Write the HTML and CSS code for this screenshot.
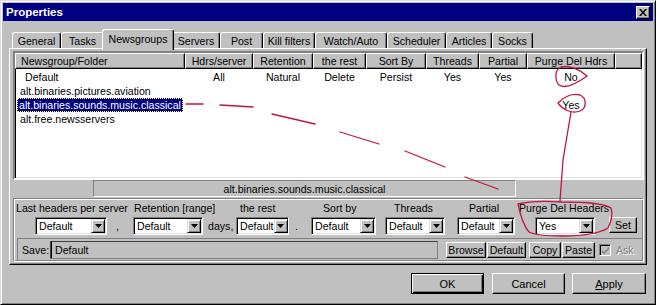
FILE: index.html
```html
<!DOCTYPE html>
<html lang="en">
<head>
<meta charset="UTF-8">
<title>Properties</title>
<link rel="stylesheet" href="styles.css">
</head>
<body>
<div class="window">
  <div class="titlebar">
    <span class="title">Properties</span>
    <span class="close">
      <svg width="8" height="7" viewBox="0 0 8 7"><path d="M0 0h2l2 2.5L6 0h2L5 3.5 8 7H6L4 4.5 2 7H0l3-3.5z" fill="#000"/></svg>
    </span>
  </div>

  <div class="main">
    <div class="tabs">
      <div class="tab t-general">General</div>
      <div class="tab t-tasks">Tasks</div>
      <div class="tab active">Newsgroups</div>
      <div class="tab t-servers">Servers</div>
      <div class="tab t-post">Post</div>
      <div class="tab t-kill">Kill filters</div>
      <div class="tab t-watch">Watch/Auto</div>
      <div class="tab t-sched">Scheduler</div>
      <div class="tab t-articles">Articles</div>
      <div class="tab t-socks">Socks</div>
    </div>

    <div class="panel">
      <div class="list">
        <div class="list-head cols">
          <div class="hcell first">Newsgroup/Folder</div>
          <div class="hcell">Hdrs/server</div>
          <div class="hcell">Retention</div>
          <div class="hcell">the rest</div>
          <div class="hcell">Sort By</div>
          <div class="hcell">Threads</div>
          <div class="hcell">Partial</div>
          <div class="hcell">Purge Del Hdrs</div>
          <div class="hcell"></div>
        </div>
        <div class="rows">
          <div class="row cols">
            <div class="cell name default">Default</div>
            <div class="cell">All</div>
            <div class="cell">Natural</div>
            <div class="cell">Delete</div>
            <div class="cell">Persist</div>
            <div class="cell">Yes</div>
            <div class="cell">Yes</div>
            <div class="cell">No</div>
          </div>
          <div class="row cols">
            <div class="cell name">alt.binaries.pictures.aviation</div>
          </div>
          <div class="row cols">
            <div class="cell name"><span class="selected">alt.binaries.sounds.music.classical</span></div>
            <div class="cell"></div>
            <div class="cell"></div>
            <div class="cell"></div>
            <div class="cell"></div>
            <div class="cell"></div>
            <div class="cell"></div>
            <div class="cell">Yes</div>
          </div>
          <div class="row cols">
            <div class="cell name">alt.free.newsservers</div>
          </div>
        </div>
      </div>

      <div class="status">
        <div class="status-box">alt.binaries.sounds.music.classical</div>
      </div>

      <div class="group">
        <div class="fields">
          <div class="field f-last">
            <div class="field-label">Last headers per server</div>
            <div class="field-row">
              <div class="combo"><span class="combo-text">Default</span><span class="combo-btn"><svg width="7" height="4" viewBox="0 0 7 4"><path d="M0 0h7L3.5 4z" fill="#000"/></svg></span></div>
              <span class="sep">,</span>
            </div>
          </div>
          <div class="field f-ret">
            <div class="field-label">Retention [range]</div>
            <div class="field-row">
              <div class="combo"><span class="combo-text">Default</span><span class="combo-btn"><svg width="7" height="4" viewBox="0 0 7 4"><path d="M0 0h7L3.5 4z" fill="#000"/></svg></span></div>
              <span class="sep">days,</span>
            </div>
          </div>
          <div class="field f-rest">
            <div class="field-label">the rest</div>
            <div class="field-row">
              <div class="combo"><span class="combo-text">Default</span><span class="combo-btn"><svg width="7" height="4" viewBox="0 0 7 4"><path d="M0 0h7L3.5 4z" fill="#000"/></svg></span></div>
              <span class="sep">.</span>
            </div>
          </div>
          <div class="field f-sort">
            <div class="field-label">Sort by</div>
            <div class="field-row">
              <div class="combo"><span class="combo-text">Default</span><span class="combo-btn"><svg width="7" height="4" viewBox="0 0 7 4"><path d="M0 0h7L3.5 4z" fill="#000"/></svg></span></div>
            </div>
          </div>
          <div class="field f-threads">
            <div class="field-label">Threads</div>
            <div class="field-row">
              <div class="combo"><span class="combo-text">Default</span><span class="combo-btn"><svg width="7" height="4" viewBox="0 0 7 4"><path d="M0 0h7L3.5 4z" fill="#000"/></svg></span></div>
            </div>
          </div>
          <div class="field f-partial">
            <div class="field-label">Partial</div>
            <div class="field-row">
              <div class="combo"><span class="combo-text">Default</span><span class="combo-btn"><svg width="7" height="4" viewBox="0 0 7 4"><path d="M0 0h7L3.5 4z" fill="#000"/></svg></span></div>
            </div>
          </div>
          <div class="field f-purge">
            <div class="field-label">Purge Del Headers</div>
            <div class="field-row">
              <div class="combo"><span class="combo-text">Yes</span><span class="combo-btn"><svg width="7" height="4" viewBox="0 0 7 4"><path d="M0 0h7L3.5 4z" fill="#000"/></svg></span></div>
            </div>
          </div>
          <div class="field f-set">
            <div class="btn small set">Set</div>
          </div>
        </div>

        <div class="save-row">
          <span class="save-label">Save:</span>
          <div class="save-field">Default</div>
          <div class="btn small browse">Browse</div>
          <div class="btn small bdefault">Default</div>
          <div class="btn small copy">Copy</div>
          <div class="btn small paste">Paste</div>
          <span class="check">
            <svg width="7" height="7" viewBox="0 0 7 7"><path d="M0 3l2 2 5-5v2L2 7 0 5z" fill="#808080"/></svg>
          </span>
          <span class="ask">Ask</span>
        </div>
      </div>
    </div>

    <div class="actions">
      <div class="btn big ok">OK</div>
      <div class="btn big">Cancel</div>
      <div class="btn big apply"><u>A</u>pply</div>
    </div>
  </div>
</div>

<!-- red pen marks drawn over the dialog -->
<svg class="marks" width="656" height="305" viewBox="0 0 656 305">
  <g fill="none" stroke="#c4143c" stroke-width="1.3" stroke-linecap="round" stroke-linejoin="round">
    <path d="M587 76C579 69 569 65 561 67C554 70 555 81 559 85C565 89 576 84 587 76"/>
    <path d="M558 103C563 97 572 93 580 95C587 98 587 108 580 111C572 114 563 110 558 103"/>
    <path d="M571 112L563 160L560 201"/>
    <path d="M518 204C530 201 548 201 562 202C585 202 604 203 611 208C613 214 611 222 608 228C600 233 588 236 562 236C545 236 533 234 529 232C523 225 520 214 518 204"/>
    <path d="M186 104L203 104M220 105L253 107M272 114L315 124M340 132L379 144M405 151L445 167M465 177L498 189"/>
  </g>
</svg>
</body>
</html>
```

FILE: styles.css
```css
/* Win95 style property sheet */
html,
body {
  margin: 0;
  padding: 0;
}

body {
  position: relative;
  width: 656px;
  height: 305px;
  overflow: hidden;
  background: #c0c0c0;
  font-family: "Liberation Sans", Arial, sans-serif;
  font-size: 10.6px;
  color: #000;
}

*,
::before,
::after {
  box-sizing: border-box;
}

.window {
  width: 656px;
  height: 305px;
  padding: 2px;
  border: 1px solid;
  border-color: #dfdfdf #000 #000 #dfdfdf;
  box-shadow: inset 1px 1px #fff, inset -1px -1px #808080;
  display: flex;
  flex-direction: column;
}

/* TITLE BAR */
.titlebar {
  height: 18px;
  flex: none;
  background: #000080;
  color: #fff;
  display: flex;
  align-items: center;
  justify-content: space-between;
  padding: 0 3px 0 3px;
}

.title {
  font-weight: bold;
  font-size: 11.5px;
}

.close {
  width: 14px;
  height: 13px;
  background: #c0c0c0;
  border: 1px solid;
  border-color: #fff #000 #000 #fff;
  box-shadow: inset -1px -1px #808080;
  display: flex;
  align-items: center;
  justify-content: center;
}

/* TABS */
.main {
  flex: 1;
  display: flex;
  flex-direction: column;
  padding: 8px 6px 0 6px;
}

.tabs {
  position: relative;
  z-index: 1;
  height: 21px;
  margin-bottom: -2px;
  padding-left: 3px;
  display: flex;
  align-items: flex-end;
}

.tab {
  flex: none;
  height: 16px;
  margin-bottom: 2px;
  border: 1px solid;
  border-color: #fff #000 transparent #fff;
  border-bottom: 0;
  border-radius: 3px 3px 0 0;
  box-shadow: inset -1px 0 #808080;
  background: #c0c0c0;
  display: flex;
  align-items: center;
  justify-content: center;
  white-space: nowrap;
}

.t-general { width: 49px; }
.t-tasks { width: 43px; }
.t-servers { width: 48px; }
.t-post { width: 43px; }
.t-kill { width: 52px; }
.t-watch { width: 72px; }
.t-sched { width: 59px; }
.t-articles { width: 46px; }
.t-socks { width: 41px; }

.tab.active {
  width: 72px;
  height: 21px;
  margin: 0 -2px;
  padding-bottom: 3px;
  position: relative;
  z-index: 2;
}

/* PANEL */
.panel {
  flex: none;
  border: 1px solid;
  border-color: #fff #000 #000 #fff;
  box-shadow: inset -1px -1px #808080;
  padding: 2px 2px 2px 3px;
  display: flex;
  flex-direction: column;
}

/* LIST VIEW */
.list {
  height: 129px;
  border: 2px solid;
  border-color: #808080 #fff #fff #808080;
  box-shadow: inset 1px 1px #000, inset -1px -1px #dfdfdf;
  background: #fff;
  display: flex;
  flex-direction: column;
}

.cols {
  display: grid;
  grid-template-columns: 170px 68px 60px 53px 60px 53px 48px 88px 1fr;
}

.list-head {
  height: 16px;
  flex: none;
}

.hcell {
  border: 1px solid;
  border-color: #fff #000 #000 #fff;
  box-shadow: inset -1px -1px #808080;
  background: #c0c0c0;
  display: flex;
  align-items: center;
  justify-content: center;
  white-space: nowrap;
  overflow: hidden;
}

.hcell.first {
  justify-content: flex-start;
  padding-left: 5px;
}

.rows {
  padding-top: 1px;
}

.row {
  height: 14px;
}

.cell {
  text-align: center;
  line-height: 14px;
  white-space: nowrap;
}

.cell.name {
  text-align: left;
  padding-left: 5px;
}

.cell.default {
  padding-left: 10px;
}

.selected {
  display: inline-block;
  margin-left: -3px;
  padding: 0 2px;
  height: 14px;
  background: #000080;
  color: #fff;
  outline: 1px dotted #ffff80;
  outline-offset: -1px;
}

/* STATUS STRIP */
.status {
  height: 17px;
  padding-left: 80px;
  display: flex;
}

.status-box {
  width: 423px;
  border: 1px solid;
  border-color: #808080 #fff #fff #808080;
  display: flex;
  align-items: center;
  justify-content: center;
}

/* GROUP */
.group {
  height: 64px;
  margin-top: 1px;
  border: 1px solid;
  border-color: #808080 #fff #fff #808080;
  box-shadow: inset 1px 1px #fff, inset -1px -1px #808080;
  padding-top: 3px;
  display: flex;
  flex-direction: column;
}

.fields {
  display: flex;
}

.field {
  flex: none;
  display: flex;
  flex-direction: column;
}

.field-label {
  height: 12px;
  line-height: 12px;
  white-space: nowrap;
}

.field-row {
  height: 18px;
  margin-top: 3px;
  display: flex;
  align-items: center;
  white-space: nowrap;
}

.combo {
  height: 18px;
  padding: 1px;
  border: 1px solid;
  border-color: #808080 #fff #fff #808080;
  box-shadow: inset 1px 1px #000, inset -1px -1px #dfdfdf;
  background: #fff;
  display: flex;
  align-items: stretch;
}

.combo-text {
  flex: 1;
  padding-left: 2px;
  line-height: 14px;
}

.combo-btn {
  width: 14px;
  flex: none;
  background: #c0c0c0;
  border: 1px solid;
  border-color: #dfdfdf #000 #000 #dfdfdf;
  box-shadow: inset 1px 1px #fff, inset -1px -1px #808080;
  display: flex;
  align-items: center;
  justify-content: center;
}

.f-last { width: 117px; }
.f-last .field-label { padding-left: 2px; }
.f-last .combo { width: 72px; margin-left: 21px; }
.f-last .sep { margin-left: 9px; }

.f-ret { width: 105px; }
.f-ret .field-label { padding-left: 3px; }
.f-ret .combo { width: 70px; margin-left: 2px; }
.f-ret .sep { margin-left: 5px; }

.f-rest { width: 69px; }
.f-rest .field-label { padding-left: 4px; }
.f-rest .combo { width: 53px; }
.f-rest .sep { margin-left: 6px; }

.f-sort { width: 77px; }
.f-sort .field-label { padding-left: 18px; }
.f-sort .combo { width: 65px; margin-left: 6px; }

.f-threads { width: 65px; }
.f-threads .field-label { padding-left: 12px; }
.f-threads .combo { width: 60px; margin-left: 3px; }

.f-partial { width: 68px; }
.f-partial .field-label { padding-left: 22px; }
.f-partial .combo { width: 58px; margin-left: 10px; }

.f-purge { width: 80px; }
.f-purge .field-label { padding-left: 4px; }
.f-purge .combo { width: 60px; margin-left: 20px; }

.f-set {
  padding-top: 15px;
  padding-left: 14px;
}

/* BUTTONS */
.btn {
  background: #c0c0c0;
  border: 1px solid;
  border-color: #fff #000 #000 #fff;
  box-shadow: inset -1px -1px #808080;
  display: flex;
  align-items: center;
  justify-content: center;
  white-space: nowrap;
  flex: none;
}

.btn.small {
  height: 16px;
}

.set { width: 28px; height: 15px; }
.browse { width: 40px; margin-left: 8px; }
.bdefault { width: 39px; margin-left: 1px; }
.copy { width: 32px; margin-left: 3px; }
.paste { width: 33px; margin-left: 1px; }

/* SAVE ROW */
.save-row {
  height: 23px;
  margin: 3px 1px 0 3px;
  border-top: 1px solid #808080;
  border-left: 1px solid #808080;
  display: flex;
  align-items: center;
}

.save-label {
  width: 32px;
  padding-left: 4px;
}

.save-field {
  width: 388px;
  height: 18px;
  border: 1px solid;
  border-color: #404040 #808080 #808080 #404040;
  box-shadow: inset 1px 0 #000;
  padding-left: 4px;
  line-height: 16px;
}

.check {
  width: 12px;
  height: 12px;
  margin-left: 4px;
  border: 1px solid;
  border-color: #808080 #fff #fff #808080;
  box-shadow: inset 1px 1px #000;
  display: flex;
  align-items: center;
  justify-content: center;
}

.ask {
  margin-left: 5px;
  color: #808080;
  text-shadow: 1px 1px #fff;
}

/* DIALOG BUTTONS */
.actions {
  margin-top: 8px;
  padding-right: 1px;
  display: flex;
  justify-content: flex-end;
}

.btn.big {
  width: 73px;
  height: 21px;
  margin-left: 8px;
  font-size: 11px;
}

.btn.ok {
  margin-left: 0;
  border-color: #000;
  box-shadow: inset 1px 1px #fff, inset -1px -1px #000, inset -2px -2px #808080;
}

.btn.apply {
  width: 74px;
  margin-left: 7px;
}

/* RED PEN OVERLAY */
.marks {
  position: absolute;
  top: 0;
  left: 0;
  pointer-events: none;
}
```
